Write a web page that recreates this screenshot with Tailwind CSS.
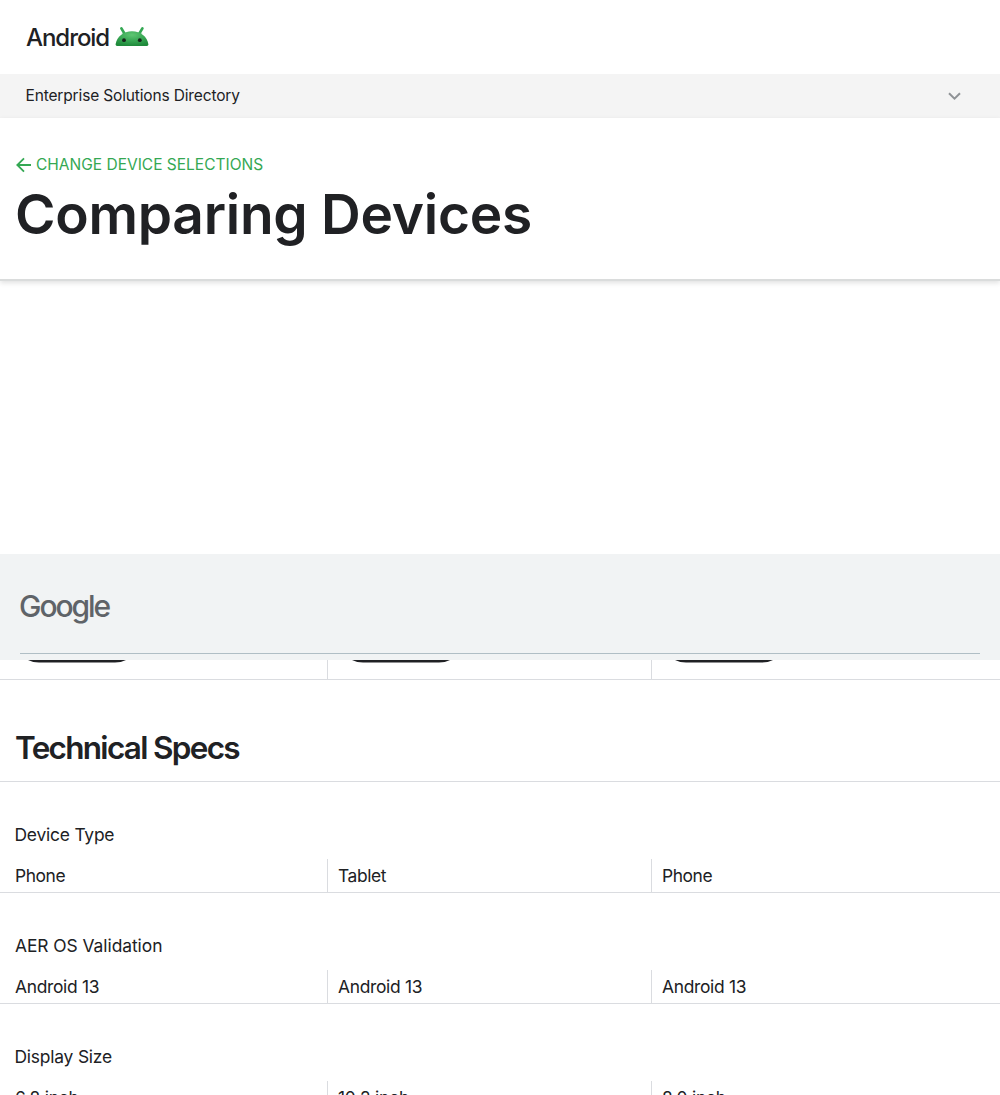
<!DOCTYPE html>
<html lang="en">
<head>
<meta charset="utf-8">
<title>Comparing Devices</title>
<script src="https://cdn.jsdelivr.net/npm/@tailwindcss/browser@4"></script>
</head>
<body class="h-[1095px] overflow-hidden bg-white font-['Inter',sans-serif] text-[#202124]">
<header class="flex h-[74px] items-start pl-[26px] pt-[26px]">
  <span class="w-[89px] text-[24px] leading-6 font-medium tracking-[-1.050px]">Android</span>
  <svg class="h-5 w-[34px]" viewBox="0 0 34 20">
    <defs><radialGradient id="g" cx=".5" cy=".25" r=".75"><stop offset="0" stop-color="#5fc673"/><stop offset=".55" stop-color="#37a653"/><stop offset="1" stop-color="#1f8a3b"/></radialGradient></defs>
    <path d="M6.400 2.300 9.800 8.200M27.400 2.300 24 8.200" stroke="#34a853" stroke-width="2.700" stroke-linecap="round"/>
    <path d="M.6 18.300C1.800 10.600 8.400 5.200 17 5.200s15.200 5.400 16.400 13.100c.1.900-.4 1.500-1.400 1.600H2c-1-.1-1.500-.7-1.400-1.600z" fill="url(#g)"/>
    <circle cx="9" cy="14.200" r="1.900" fill="#17251b"/><circle cx="24.800" cy="14.200" r="1.900" fill="#17251b"/>
  </svg>
</header>
<nav class="flex h-11 items-center justify-between bg-[#f4f4f4] pl-[25.500px] pr-[38px]">
  <span class="pb-px text-[15.500px] leading-5 tracking-[-0.150px]">Enterprise Solutions Directory</span>
  <svg class="h-[9px] w-[15px]" viewBox="0 0 15 9" fill="none" stroke="#8f9396" stroke-width="2"><path d="M2 1.200l5.500 5.500L13 1.200"/></svg>
</nav>
<section class="relative h-[163px] border-b-2 border-[#dadcdc] pl-4 pt-[37px] shadow-[0_2px_5px_rgba(0,0,0,0.12)]">
  <a class="flex items-center text-[15.500px] leading-[20px] text-[#34a853]">
    <svg class="mr-[4px] h-4 w-4" viewBox="0 0 16 16" fill="none" stroke="#34a853" stroke-width="1.800"><path d="M15 8H1.500M8 1.300 1.300 8 8 14.700"/></svg>
    <span>CHANGE DEVICE SELECTIONS</span>
  </a>
  <h1 class="-ml-px mt-[7px] text-[55px] leading-[64px] font-semibold tracking-[-0.260px]">Comparing Devices</h1>
</section>
<div class="h-[273px]"></div>
<section class="h-[106px] bg-[#f1f3f4] px-5">
  <div class="h-[100px] border-b border-[#b0bec5] pt-[36px]">
    <span class="-ml-px text-[30px] leading-[32px] font-medium tracking-[-2.050px] text-[#5f6368]">Google</span>
  </div>
</section>
<div class="flex h-5 border-b border-[#dadce0] pl-[5px]">
  <div class="w-[323px] border-r border-[#dadce0] pl-[21px]"><svg class="h-[3px] w-[102px]" viewBox="0 0 102 3"><path d="M2 0h98q-5 2.500-11 2.500H13Q7 2.500 2 0z" fill="#202124"/></svg></div>
  <div class="w-[324px] border-r border-[#dadce0] pl-[22px]"><svg class="h-[3px] w-[102px]" viewBox="0 0 102 3"><path d="M2 0h98q-5 2.500-11 2.500H13Q7 2.500 2 0z" fill="#202124"/></svg></div>
  <div class="pl-[21px]"><svg class="h-[3px] w-[102px]" viewBox="0 0 102 3"><path d="M2 0h98q-5 2.500-11 2.500H13Q7 2.500 2 0z" fill="#202124"/></svg></div>
</div>
<h2 class="h-[102px] border-b border-[#dadce0] pl-[15px] pt-[48px] text-[31.500px] leading-[40px] font-semibold tracking-[-1.700px]">Technical Specs</h2>
<section class="h-[111px] border-b border-[#dadce0] pt-[41px] text-[17.400px] leading-6">
  <h3 class="h-[36px] pl-[14.500px] tracking-[-0.2px]">Device Type</h3>
  <div class="flex h-[33px] pl-[5px] tracking-[-0.4px]">
    <div class="w-[323px] border-r border-[#dadce0] pl-[10px] pt-[5px]">Phone</div>
    <div class="w-[324px] border-r border-[#dadce0] pl-[10px] pt-[5px]">Tablet</div>
    <div class="pl-[10px] pt-[5px]">Phone</div>
  </div>
</section>
<section class="h-[111px] border-b border-[#dadce0] pt-[41px] text-[17.400px] leading-6">
  <h3 class="h-[36px] pl-[15px] tracking-[-0.050px]">AER OS Validation</h3>
  <div class="flex h-[33px] pl-[5px] tracking-[-0.3px]">
    <div class="w-[323px] border-r border-[#dadce0] pl-[10px] pt-[5px]">Android 13</div>
    <div class="w-[324px] border-r border-[#dadce0] pl-[10px] pt-[5px]">Android 13</div>
    <div class="pl-[10px] pt-[5px]">Android 13</div>
  </div>
</section>
<section class="h-[111px] pt-[41px] text-[17.400px] leading-6">
  <h3 class="h-[36px] pl-[14.500px] tracking-[-0.2px]">Display Size</h3>
  <div class="flex h-[33px] pl-[5px] tracking-[-0.2px]">
    <div class="w-[323px] border-r border-[#dadce0] pl-[10px] pt-[5px]">6.8 inch</div>
    <div class="w-[324px] border-r border-[#dadce0] pl-[10px] pt-[5px]">10.2 inch</div>
    <div class="pl-[10px] pt-[5px]">8.0 inch</div>
  </div>
</section>
</body>
</html>
